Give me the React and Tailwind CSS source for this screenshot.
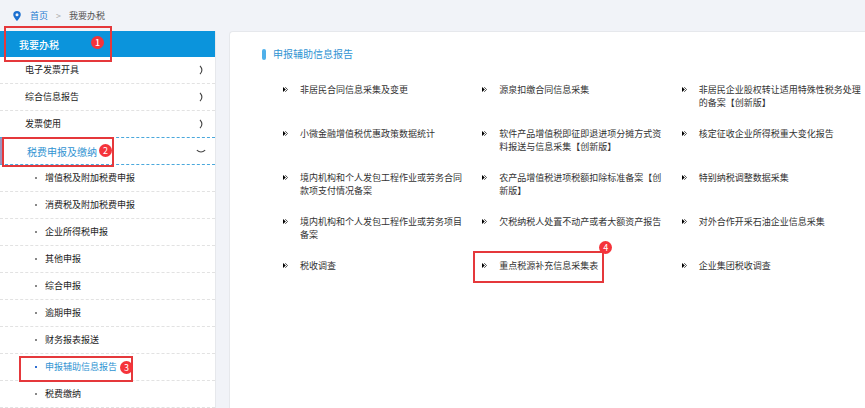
import React from "react";

// Collapsed groups shown above the open one
const closedGroups = ["电子发票开具", "综合信息报告", "发票使用"];

const subItems = [
  "增值税及附加税费申报",
  "消费税及附加税费申报",
  "企业所得税申报",
  "其他申报",
  "综合申报",
  "逾期申报",
  "财务报表报送",
  "申报辅助信息报告",
  "税费缴纳",
];

const services = [
  "非居民合同信息采集及变更",
  "源泉扣缴合同信息采集",
  "非居民企业股权转让适用特殊性税务处理的备案【创新版】",
  "小微金融增值税优惠政策数据统计",
  "软件产品增值税即征即退进项分摊方式资料报送与信息采集【创新版】",
  "核定征收企业所得税重大变化报告",
  "境内机构和个人发包工程作业或劳务合同款项支付情况备案",
  "农产品增值税进项税额扣除标准备案【创新版】",
  "特别纳税调整数据采集",
  "境内机构和个人发包工程作业或劳务项目备案",
  "欠税纳税人处置不动产或者大额资产报告",
  "对外合作开采石油企业信息采集",
  "税收调查",
  "重点税源补充信息采集表",
  "企业集团税收调查",
];

// Red frame with a numbered badge, laid over the element it points out
const Step = ({ number, frame, badge }) => (
  <span className={`pointer-events-none absolute z-10 border-2 border-[#e5383b] ${frame}`}>
    <span
      className={`absolute flex size-[13px] items-center justify-center rounded-full bg-[#f5333a] text-[9px] leading-none text-white ${badge}`}
    >
      {number}
    </span>
  </span>
);

const PinIcon = () => (
  <svg className="h-[10px] w-2" viewBox="0 0 16 20" aria-hidden="true">
    <path
      d="M8 0a7.5 7.5 0 0 0-7.5 7.5C.5 12.5 8 20 8 20s7.5-7.500 7.500-12.500A7.500 7.500 0 0 0 8 0zm0 4.500a3 3 0 1 1 0 6 3 3 0 0 1 0-6z"
      fill="#1b6fd0"
      fillRule="evenodd"
    />
  </svg>
);

const ChevronRight = () => (
  <svg className="h-[10px] w-[5px]" viewBox="0 0 5 10" fill="none" aria-hidden="true">
    <path d="M1 .8Q4.800 5 1 9.200" stroke="#444" strokeWidth="1.100" />
  </svg>
);

const ChevronDown = () => (
  <svg className="h-[5px] w-[10px]" viewBox="0 0 10 5" fill="none" aria-hidden="true">
    <path d="M.8 1.200Q5 4.800 9.200 1.200" stroke="#444" strokeWidth="1.100" />
  </svg>
);

const DoubleArrow = () => (
  <svg className="mt-[4px] h-[5px] w-[5px] shrink-0" viewBox="0 0 5 5" aria-hidden="true">
    <path d="M0 0 2.800 2.500 0 5z" fill="#000" />
    <path d="M2.300.2 4.500 2.500 2.300 4.800" fill="none" stroke="#222" strokeWidth=".8" />
  </svg>
);

const Sidebar = () => (
  <aside className="w-[216px] shrink-0 border-r border-[#e6e8ec] bg-white">
    <h2 className="relative flex h-[26px] items-center bg-[#0b94dc] pl-[19px] text-[10px] font-medium text-white">
      我要办税
      <Step number={1} frame="-top-[5px] left-[4px] h-9 w-[108px]" badge="left-[85px] top-[8px]" />
    </h2>
    <nav>
      {closedGroups.map((group, index) => (
        <button
          key={group}
          type="button"
          className={`flex h-[27px] w-full items-center justify-between border-b border-dashed pl-[25px] pr-[11px] text-[9px] text-[#222] ${
            index === closedGroups.length - 1 ? "border-[#4aa8dc]" : "border-[#e2e2e2]"
          }`}
        >
          {group}
          <ChevronRight />
        </button>
      ))}
      <button
        type="button"
        aria-expanded="true"
        className="relative flex h-[27px] w-full items-center justify-between border-b border-dashed border-[#4aa8dc] pl-[27px] pr-[9px] text-[10px] text-[#2f93d2]"
      >
        <span className="absolute inset-y-0 left-0 w-[2px] bg-[#9a94bd]" />
        税费申报及缴纳
        <ChevronDown />
        <Step number={2} frame="-top-px left-[2px] h-[30px] w-28" badge="left-[95px] top-[5px]" />
      </button>
      <ul>
        {subItems.map((item) => {
          const active = item === "申报辅助信息报告";
          return (
            <li key={item} className="relative h-[27px] border-b border-dashed border-[#e2e2e2]">
              <a
                href="#"
                className={`flex h-full items-center gap-2 pl-[35px] text-[9px] ${
                  active ? "text-[#2f93d2]" : "text-[#222]"
                }`}
              >
                <span className={`size-[2px] ${active ? "bg-[#2f6fd2]" : "bg-[#888]"}`} />
                {item}
              </a>
              {active && (
                <Step number={3} frame="top-[2px] left-[19px] h-[26px] w-[114px]" badge="left-[99px] top-[3px]" />
              )}
            </li>
          );
        })}
      </ul>
    </nav>
  </aside>
);

const App = () => {
  return (
    <div className="flex min-h-screen flex-col bg-[#f1f3f8] font-['Noto_Sans_CJK_SC',sans-serif]">
      <div className="flex h-[31px] shrink-0 items-center pl-[13px] text-[9px]">
        <PinIcon />
        <a href="#" className="ml-[9px] text-[#2579d0]">
          首页
        </a>
        <span className="mx-2 text-[#aaa]">&gt;</span>
        <span className="text-[#555]">我要办税</span>
      </div>
      <div className="flex grow gap-[13px]">
        <Sidebar />
        <main className="min-w-0 grow rounded-tl-sm border-l border-t border-[#e6e8ec] bg-white pl-8 pt-[14px]">
          <h1 className="flex items-center gap-[7px] text-[10px] leading-4 text-[#2f93d2]">
            <span className="h-[11px] w-1 rounded-[2px] bg-[#4fb0ea]" />
            申报辅助信息报告
          </h1>
          <ul className="mt-[21px] grid grid-cols-3 gap-x-4 gap-y-[18px] pl-[21px]">
            {services.map((service) => (
              <li key={service} className="relative">
                <a href="#" className="flex gap-3 text-[9px] leading-[13px] text-[#333]">
                  <DoubleArrow />
                  <span>{service}</span>
                </a>
                {service === "重点税源补充信息采集表" && (
                  <Step number={4} frame="-top-[8px] -left-[9px] h-8 w-[131px]" badge="-right-[10px] -top-[12px]" />
                )}
              </li>
            ))}
          </ul>
        </main>
      </div>
    </div>
  );
};

export default App;
